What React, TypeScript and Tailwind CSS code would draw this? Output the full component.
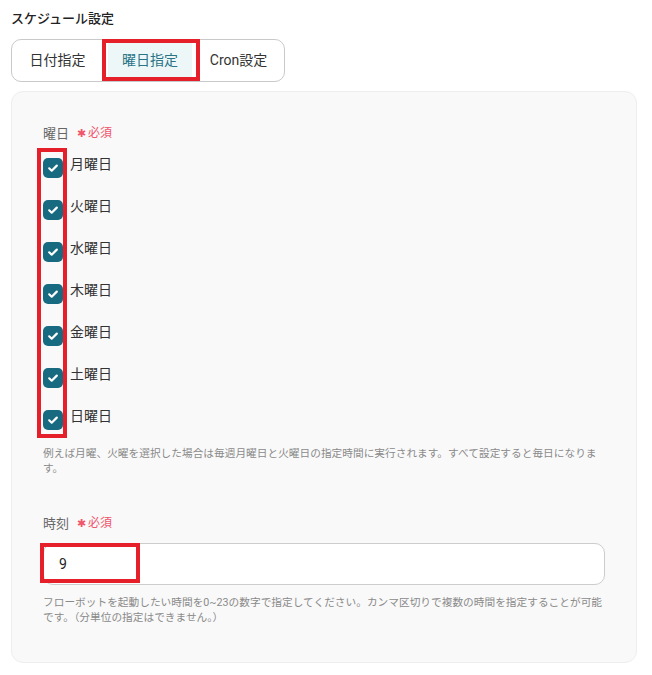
import React from "react";

const days = ["月曜日", "火曜日", "水曜日", "木曜日", "金曜日", "土曜日", "日曜日"];

function Check() {
  return (
    <span className="mt-[11px] flex h-[20px] w-[20px] shrink-0 items-center justify-center rounded-[5px] bg-[#176a7f]">
      <svg width="12" height="12" viewBox="0 0 12 12" fill="none">
        <path d="M2.2 6.3l2.5 2.4L9.8 3.6" stroke="#fff" strokeWidth="2.2" strokeLinecap="round" strokeLinejoin="round" />
      </svg>
    </span>
  );
}

function Required() {
  return (
    <span className="ml-[8px] text-[12px] text-[#f0556c]">
      <span className="mr-[2px] text-[11px]">✱</span>必須
    </span>
  );
}

export default function App() {
  return (
    <div
      className="relative w-[652px] h-[675px] bg-white"
      style={{ fontFamily: 'Roboto, "Noto Sans CJK JP", sans-serif' }}
    >
      <div className="px-[11px] pt-[9px]">
        <div className="text-[13px] font-medium leading-[20px] text-[#222]">スケジュール設定</div>
        <div className="mt-[10px] flex h-[43px] w-[274px] items-center rounded-[10px] border border-[#c9c9c9] px-[3px] text-[14px] text-[#333]">
          <div className="flex h-[36px] w-[85px] items-center justify-center">日付指定</div>
          <div className="ml-[8px] flex h-[36px] w-[84px] items-center justify-center bg-[#eef7f8] text-[#2a7487]">曜日指定</div>
          <div className="flex h-[36px] flex-1 items-center justify-center pl-[4px]">Cron設定</div>
        </div>

        <div className="mt-[9px] w-[626px] rounded-[12px] border border-[#eeeeee] bg-[#f9f9f9] pl-[31px] pr-[31px] pt-[32px] pb-[37px]">
          <div className="flex items-center leading-[18px]">
            <span className="text-[13px] text-[#666]">曜日</span>
            <Required />
          </div>
          <div className="mt-[4px]">
            {days.map((d) => (
              <div key={d} className="flex h-[42px] items-start">
                <Check />
                <span className="ml-[7px] mt-[7px] text-[14px] leading-[21px] text-[#333]">{d}</span>
              </div>
            ))}
          </div>
          <p className="mt-[5px] text-[10.7px] leading-[15px] text-[#8a8a8a]">
            例えば月曜、火曜を選択した場合は毎週月曜日と火曜日の指定時間に実行されます。すべて設定すると毎日になります。
          </p>

          <div className="mt-[38px] flex items-center leading-[18px]">
            <span className="text-[13px] text-[#666]">時刻</span>
            <Required />
          </div>
          <div className="mt-[10px] flex h-[42px] items-center rounded-[10px] border border-[#cccccc] bg-white px-[15px] text-[14px] text-[#222]">
            9
          </div>
          <p className="mt-[10px] text-[10.7px] leading-[15px] text-[#8a8a8a]">
            フローボットを起動したい時間を0~23の数字で指定してください。カンマ区切りで複数の時間を指定することが可能です。（分単位の指定はできません。）
          </p>
        </div>
      </div>

      <div className="pointer-events-none absolute left-[102px] top-[39px] h-[42px] w-[98px] border-[4px] border-[#e5202a]" />
      <div className="pointer-events-none absolute left-[37px] top-[148px] h-[290px] w-[30px] border-[4px] border-[#e5202a]" />
      <div className="pointer-events-none absolute left-[40px] top-[543px] h-[40px] w-[100px] border-[4px] border-[#e5202a]" />
    </div>
  );
}
